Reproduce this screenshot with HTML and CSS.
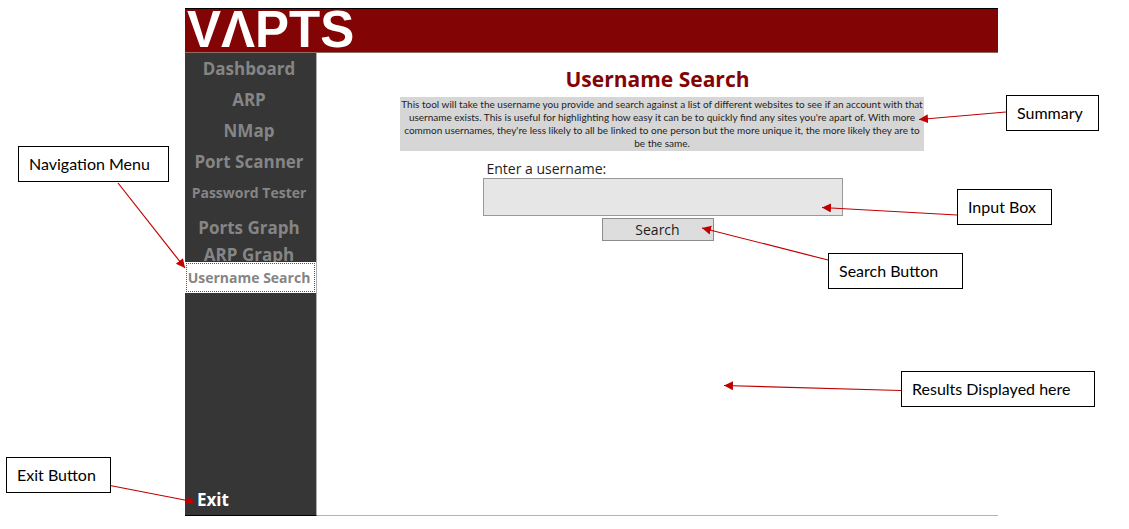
FILE: index.html
```html
<!DOCTYPE html>
<html lang="en">
<head>
<meta charset="utf-8">
<title>VAPTS - Username Search</title>
<link rel="stylesheet" href="styles.css">
</head>
<body>
<div class="app">
  <header class="banner"><span class="logo">VΛPTS</span></header>
  <div class="body">
    <nav class="sidebar">
      <button class="nav-item" type="button">Dashboard</button>
      <button class="nav-item" type="button">ARP</button>
      <button class="nav-item" type="button">NMap</button>
      <button class="nav-item" type="button">Port Scanner</button>
      <button class="nav-item nav-small" type="button">Password Tester</button>
      <button class="nav-item nav-tall" type="button">Ports Graph</button>
      <button class="nav-item nav-short" type="button">ARP Graph</button>
      <button class="nav-item nav-small nav-active" type="button">Username Search</button>
      <button class="nav-item nav-exit" type="button">Exit</button>
    </nav>
    <main class="content">
      <h1 class="title">Username Search</h1>
      <p class="summary">This tool will take the username you provide and search against a list of different websites to see if an account with that<br> username exists. This is useful for highlighting how easy it can be to quickly find any sites you're apart of. With more<br> common usernames, they're less likely to all be linked to one person but the more unique it, the more likely they are to<br> be the same.</p>
      <form class="search">
        <label class="label" for="username">Enter a username:</label>
        <input class="field" id="username" type="text">
        <button class="submit" type="button">Search</button>
      </form>
    </main>
  </div>
</div>
<div class="notes">
  <svg class="arrows" width="1129" height="529" viewBox="0 0 1129 529" aria-hidden="true">
    <defs>
      <marker id="head" markerUnits="userSpaceOnUse" markerWidth="10" markerHeight="10" refX="9" refY="4.500" orient="auto"><path d="M0 0L9 4.500L0 9Z" fill="#c00000" stroke="none"/></marker>
    </defs>
    <g stroke="#c00000" stroke-width="1.200">
      <path d="M118 183L185 268" marker-end="url(#head)"/>
      <path d="M1006 112L919 119.500" marker-end="url(#head)"/>
      <path d="M957 215L822 207.500" marker-end="url(#head)"/>
      <path d="M828 260L702 228" marker-end="url(#head)"/>
      <path d="M901 390.500L724 385.500" marker-end="url(#head)"/>
      <path d="M110 485.500L195 502" marker-end="url(#head)"/>
    </g>
  </svg>
  <div class="note note-nav">Navigation Menu</div>
  <div class="note note-summary">Summary</div>
  <div class="note note-input">Input Box</div>
  <div class="note note-button">Search Button</div>
  <div class="note note-results">Results Displayed here</div>
  <div class="note note-exit">Exit Button</div>
</div>
</body>
</html>
```
FILE: styles.css
```css
* { box-sizing: border-box; }

body {
  margin: 0;
  min-height: 100vh;
  display: flex;
  background: #fff;
  font-family: "Open Sans", "Noto Sans", sans-serif;
  color: #1e1e1e;
}

button, input { font: inherit; color: inherit; }

.app {
  flex: 1;
  display: flex;
  flex-direction: column;
  margin: 8px 131px 13px 185px;
}

.banner {
  height: 45px;
  padding-left: 2px;
  background: #830404;
  border-top: 1px solid #000;
  border-bottom: 1px solid #8f6a66;
}

.logo {
  display: block;
  font: bold 51px/42px "Liberation Sans", Arial, sans-serif;
  color: #fff;
}

.body { flex: 1; display: flex; }

.sidebar {
  width: 132px;
  display: flex;
  flex-direction: column;
  background: #363636;
  border-right: 1px solid #adadad;
  border-bottom: 1px solid #000;
}

.nav-item {
  height: 31px;
  padding: 0 3px 0 0;
  border: 0;
  background: none;
  color: #858585;
  font-size: 17px;
  font-weight: 700;
  line-height: 31px;
  white-space: nowrap;
}

.nav-small { font-size: 14px; }

.nav-tall { height: 38px; }

.nav-short {
  height: 16px;
  line-height: 18px;
}

.nav-active {
  background: #fff;
  outline: 1px dotted #555;
  outline-offset: -2px;
}

.nav-exit {
  margin-top: auto;
  padding-left: 12px;
  color: #fff;
  text-align: left;
}

.content {
  flex: 1;
  display: flex;
  flex-direction: column;
  align-items: center;
  padding-top: 10px;
  border-bottom: 1px solid #b4b4b4;
}

.title {
  margin: 0 0 2px;
  color: #830404;
  font-size: 21px;
  line-height: 32px;
}

.summary {
  width: 524px;
  max-width: 100%;
  margin: 0 0 0 9px;
  padding: 1px 0;
  background: #d6d6d6;
  font-family: Lato, sans-serif;
  font-size: 10px;
  line-height: 13px;
  text-align: center;
}

.search {
  width: 360px;
  max-width: 100%;
  display: flex;
  flex-direction: column;
  margin: 9px 0 0 10px;
}

.label {
  padding-left: 4px;
  font-size: 14px;
  line-height: 18px;
}

.field {
  height: 38px;
  padding: 0 8px;
  border: 1px solid #999;
  background: #e6e6e6;
}

.submit {
  width: 112px;
  height: 23px;
  margin: 2px 0 0 119px;
  padding: 0;
  border: 1px solid #8c8c8c;
  background: #ddd;
  font-size: 14px;
  line-height: 21px;
}

.notes {
  position: absolute;
  top: 0;
  left: 0;
  pointer-events: none;
}

.arrows { display: block; }

.note {
  position: absolute;
  height: 36px;
  padding-left: 10px;
  border: 1px solid #000;
  background: #fff;
  color: #000;
  font-family: Lato, sans-serif;
  font-size: 16px;
  line-height: 34px;
  white-space: nowrap;
}

.note-nav { left: 18px; top: 146px; width: 151px; }
.note-summary { left: 1006px; top: 95px; width: 93px; }
.note-input { left: 957px; top: 189px; width: 95px; }
.note-button { left: 828px; top: 253px; width: 135px; }
.note-results { left: 901px; top: 371px; width: 194px; }
.note-exit { left: 6px; top: 457px; width: 105px; }
```
